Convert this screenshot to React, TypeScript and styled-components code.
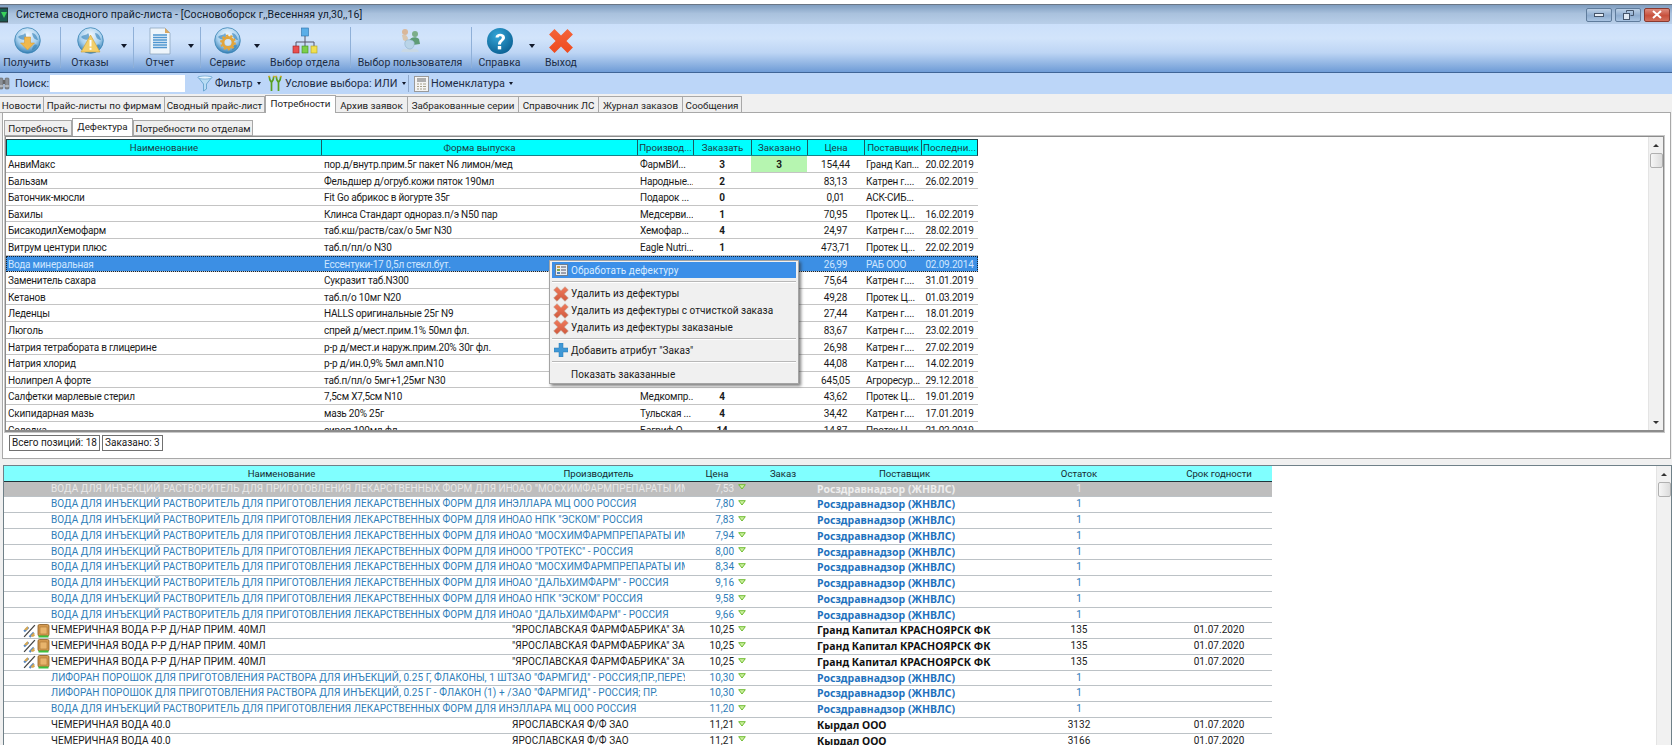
import React from "react";
import styled, { createGlobalStyle } from "styled-components";

const Global = createGlobalStyle`
  html, body { margin: 0; padding: 0; background: #fff; overflow: hidden; }
  #root { width: 1672px; height: 745px; }
`;

const UI = `Roboto, "Noto Sans", sans-serif`;

const Page = styled.div`
  width: 1672px;
  height: 745px;
  overflow: hidden;
  display: flex;
  flex-direction: column;
  background: #f0f0f0;
  font-family: ${UI};
  font-size: 11px;
  color: #111;
`;
const TopStrip = styled.div`
  height: 4px;
  background: #fff;
  border-bottom: 1px solid #6a7684;
  flex: none;
`;
const TitleBar = styled.div`
  height: 19px;
  flex: none;
  display: flex;
  align-items: center;
  background: linear-gradient(#7f9dbf, #a9c1dd 45%, #b9cfe9);
  padding-right: 2px;
`;
const TitleText = styled.div`
  margin-left: 8px;
  flex: 1;
  font-size: 10.5px;
  letter-spacing: 0.1px;
  color: #10202f;
  white-space: nowrap;
`;
const WinBtn = styled.div<{ $close?: boolean }>`
  width: 26px;
  height: 14px;
  margin-left: 3px;
  box-sizing: border-box;
  border: 1px solid ${(p) => (p.$close ? "#8a3a30" : "#5f7c9c")};
  border-radius: 2px;
  display: flex;
  align-items: center;
  justify-content: center;
  background: ${(p) =>
    p.$close
      ? "linear-gradient(#dd8b7c, #c8503c 55%, #d2705c)"
      : "linear-gradient(#bcd0e6, #8fadd0 55%, #a9c4e2)"};
`;
const Toolbar = styled.div`
  height: 48px;
  flex: none;
  display: flex;
  align-items: stretch;
  background: linear-gradient(#cbe0fb, #d2e4fb 30%, #bdd5f4 60%, #6f9cd6);
  border-bottom: 1px solid #3f6597;
`;
const Tool = styled.div<{ $w: number }>`
  width: ${(p) => p.$w}px;
  flex: none;
  display: flex;
  flex-direction: column;
  align-items: center;
  padding-top: 3px;
  box-sizing: border-box;
  font-size: 10.5px;
  letter-spacing: 0.05px;
  color: #1c2c44;
  white-space: nowrap;
`;
const IconSlot = styled.div`
  height: 27px;
  flex: none;
  display: flex;
  align-items: center;
  justify-content: center;
`;
const ToolLabel = styled.span`
  margin-top: 1px;
  line-height: 15px;
`;
const Caret = styled.div<{ $w: number }>`
  width: ${(p) => p.$w}px;
  flex: none;
  display: flex;
  justify-content: center;
  padding-top: 20px;
  box-sizing: border-box;
  &::after {
    content: "";
    border-left: 3.5px solid transparent;
    border-right: 3.5px solid transparent;
    border-top: 4px solid #10182a;
    height: 0;
  }
`;
const Sep = styled.div<{ $ml: number }>`
  width: 1px;
  flex: none;
  margin: 3px 0 4px ${(p) => p.$ml}px;
  background: #8fb0d8;
`;
const SearchBar = styled.div`
  height: 21px;
  flex: none;
  display: flex;
  align-items: center;
  background: #bcd6f8;
  font-size: 10.8px;
  color: #1c2c44;
  white-space: nowrap;
`;
const SearchLabel = styled.div`
  width: 50px;
  flex: none;
  display: flex;
  align-items: center;
`;
const SearchInput = styled.div`
  width: 135px;
  height: 17px;
  background: #fff;
  margin-right: 12px;
  flex: none;
`;
const BarItem = styled.div<{ $w: number; $gap: number }>`
  width: ${(p) => p.$w}px;
  flex: none;
  display: flex;
  align-items: center;
  gap: ${(p) => p.$gap}px;
`;
const SmallCaret = styled.span`
  border-left: 2.5px solid transparent;
  border-right: 2.5px solid transparent;
  border-top: 3px solid #10182a;
  margin-left: 2px;
  height: 0;
`;
const BarSep = styled.div`
  width: 1px;
  height: 17px;
  background: #8fa9cc;
  margin-right: 5px;
  flex: none;
`;
const TabStrip = styled.div`
  height: 18px;
  margin-top: 1px;
  flex: none;
  display: flex;
  position: relative;
  z-index: 1;
  align-items: flex-end;
`;
const Tab = styled.div<{ $w: number; $active?: boolean }>`
  width: ${(p) => p.$w}px;
  height: ${(p) => (p.$active ? 18 : 17)}px;
  flex: none;
  box-sizing: border-box;
  border: 1px solid #a8a8a8;
  border-left-width: ${(p) => (p.$active ? 1 : 0)}px;
  border-bottom: ${(p) => (p.$active ? "none" : "1px solid #a8a8a8")};
  background: ${(p) => (p.$active ? "#fff" : "#efefef")};
  text-align: center;
  line-height: ${(p) => (p.$active ? 16 : 17)}px;
  font-size: 9.8px;
  color: #222;
  white-space: nowrap;
  overflow: hidden;
`;
const Pane = styled.div`
  height: 347px;
  margin: -1px 1px 0 2px;
  flex: none;
  box-sizing: border-box;
  background: #fff;
  border: 1px solid #a8a8a8;
  padding: 6px 6px 0 1px;
  display: flex;
  flex-direction: column;
  position: relative;
`;
const SubTabs = styled.div`
  height: 17px;
  flex: none;
  display: flex;
  align-items: flex-end;
  position: relative;
  z-index: 1;
`;
const SubTab = styled(Tab)`
  border-left-width: 1px;
  height: ${(p) => (p.$active ? 18 : 16)}px;
  line-height: ${(p) => (p.$active ? 15 : 16)}px;
`;
const GridBox = styled.div`
  height: 296px;
  flex: none;
  box-sizing: border-box;
  border: 1px solid #8c8c8c;
  border-bottom-width: 2px;
  outline: 1px solid #c8c8c8;
  background: #fff;
  margin-left: 1px;
  display: flex;
  overflow: hidden;
`;
const GridScroll = styled.div`
  flex: 1;
  padding-top: 2px;
  overflow: hidden;
`;
const UHead = styled.div`
  display: grid;
  grid-template-columns: 314px 316px 56px 58px 56px 57px 57px 56px;
  width: 972px;
  height: 17px;
  background: #00ffff;
  box-sizing: border-box;
  border: 1px solid #1e3f46;
  border-bottom: 1px solid #16838a;
`;
const UHeadCell = styled.div`
  text-align: center;
  line-height: 15px;
  font-size: 9.7px;
  color: #1d3a3f;
  border-left: 1px solid #1e5a62;
  white-space: nowrap;
  overflow: hidden;
  &:first-child { border-left: none; }
`;
const URow = styled.div<{ $sel?: boolean }>`
  display: grid;
  grid-template-columns: 315px 316px 56px 58px 56px 57px 57px 57px;
  width: 972px;
  height: 16.6px;
  box-sizing: border-box;
  border-bottom: 1px solid #c4c4c4;
  font-size: 10px;
  letter-spacing: -0.2px;
  line-height: 17px;
  color: ${(p) => (p.$sel ? "#cfe6ff" : "#1a1a1a")};
  background: ${(p) => (p.$sel ? "#3c8fe4" : "#fff")};
  outline: ${(p) => (p.$sel ? "1px dotted #123" : "none")};
  outline-offset: -1px;
`;
const UCell = styled.div<{ $align?: string; $bold?: boolean; $green?: boolean; $pad?: number }>`
  text-align: ${(p) => p.$align || "left"};
  font-weight: ${(p) => (p.$bold ? 700 : 400)};
  background: ${(p) => (p.$green ? "#b6f5b0" : "transparent")};
  padding-left: ${(p) => p.$pad ?? 0}px;
  white-space: nowrap;
  overflow: hidden;
`;
const VScroll = styled.div`
  width: 15px;
  flex: none;
  background: #f1f1f1;
  border-left: 1px solid #e4e4e4;
  display: flex;
  flex-direction: column;
  align-items: center;
  box-sizing: border-box;
`;
const ScrollEnd = styled.div<{ $down?: boolean }>`
  height: 16px;
  width: 100%;
  flex: none;
  display: flex;
  align-items: center;
  justify-content: center;
  &::after {
    content: "";
    border-left: 3px solid transparent;
    border-right: 3px solid transparent;
    ${(p) => (p.$down ? "border-top: 3px solid #333;" : "border-bottom: 3px solid #333;")}
    height: 0;
  }
`;
const ScrollThumb = styled.div`
  width: 13px;
  height: 15px;
  flex: none;
  box-sizing: border-box;
  border: 1px solid #b0b0b0;
  border-radius: 2px;
  background: linear-gradient(90deg, #f6f6f6, #dcdcdc);
`;
const ScrollFill = styled.div`
  flex: 1;
`;
const StatusRow = styled.div`
  display: flex;
  gap: 2px;
  padding: 3px 0 0 5px;
`;
const StatusBox = styled.div`
  height: 16px;
  box-sizing: border-box;
  border: 1px solid #707070;
  padding: 0 2px;
  line-height: 14px;
  font-size: 10px;
  color: #1a1a1a;
  white-space: nowrap;
`;
const LowerBox = styled.div`
  margin: 6px 0 0 3px;
  flex: 1;
  min-height: 0;
  background: #fff;
  display: flex;
  box-sizing: border-box;
  border: 1px solid #6f8088;
  border-bottom: none;
  overflow: hidden;
`;
const LowerScroll = styled.div`
  width: 1268px;
  flex: none;
  overflow: hidden;
`;
const LowerFill = styled.div`
  flex: 1;
`;
const LCols = "47px 461px 173px 64px 68px 175px 174px 106px";
const LHead = styled.div`
  display: grid;
  grid-template-columns: ${LCols};
  height: 14.5px;
  background: #80ffff;
  border-bottom: 1px solid #20343a;
`;
const LHeadCell = styled.div`
  text-align: center;
  line-height: 15px;
  font-size: 9.6px;
  color: #152a30;
  white-space: nowrap;
`;
const LRow = styled.div<{ $tone: string; $gray?: boolean }>`
  display: grid;
  grid-template-columns: ${LCols};
  height: 15.75px;
  box-sizing: border-box;
  border-bottom: 1px solid #bcc2c6;
  background: ${(p) => (p.$gray ? "#bebebe" : "#fff")};
  color: ${(p) => (p.$gray ? "#e9e9e9" : p.$tone)};
  font-size: 10px;
  line-height: 14.5px;
`;
const LCell = styled.div<{ $align?: string }>`
  white-space: nowrap;
  overflow: hidden;
  text-align: ${(p) => p.$align || "left"};
  letter-spacing: 0.05px;
`;
const LIcons = styled.div`
  display: flex;
  align-items: center;
  justify-content: flex-end;
  gap: 1px;
  padding-right: 1px;
`;
const LPrice = styled.div`
  display: flex;
  align-items: center;
  justify-content: flex-end;
  padding-right: 0;
  gap: 4px;
  overflow: hidden;
`;
const LTriSlot = styled.span`
  display: flex;
  width: 11px;
  flex: none;
  margin-top: -3px;
`;
const LSupplier = styled.div<{ $tone: string }>`
  font-family: "Noto Sans", sans-serif;
  font-weight: 700;
  font-size: 10.5px;
  color: ${(p) => p.$tone};
  white-space: nowrap;
  overflow: hidden;
`;
const Menu = styled.div`
  position: absolute;
  left: 549px;
  top: 147px;
  width: 250px;
  height: 124px;
  box-sizing: border-box;
  background: #f0f0f0;
  border: 1px solid #a4a4a4;
  box-shadow: 2px 2px 3px rgba(40, 40, 40, 0.6);
  padding: 1px 2px;
  z-index: 5;
  font-size: 10px;
  letter-spacing: 0.05px;
  color: #1a1a1a;
`;
const MenuItem = styled.div<{ $hi?: boolean; $h: number }>`
  height: ${(p) => p.$h}px;
  display: flex;
  align-items: center;
  background: ${(p) => (p.$hi ? "#3c8fe8" : "transparent")};
  color: ${(p) => (p.$hi ? "#d8ecff" : "#1a1a1a")};
  white-space: nowrap;
`;
const MenuIcon = styled.div`
  width: 18px;
  flex: none;
  display: flex;
  justify-content: center;
  margin-right: 1px;
`;
const MenuSep = styled.div`
  height: 1px;
  background: #b8b8b8;
  margin: 3px 0 2px 0;
  border-bottom: 1px solid #fff;
`;
const Body = styled.div`
  position: relative;
`;
const NoShrink = styled.svg`
  flex: none;
`;
const BinoSvg = styled.svg`
  flex: none;
  margin: 0 5px 0 -2px;
`;

/* ---------- icons ---------- */
const Globe: React.FC<{ id: string; children?: React.ReactNode }> = ({ id, children }) => (
  <svg width="27" height="27" viewBox="0 0 27 27">
    <defs>
      <radialGradient id={id} cx="50%" cy="30%" r="75%">
        <stop offset="0%" stopColor="#f2f8ff" />
        <stop offset="55%" stopColor="#a8d0ee" />
        <stop offset="100%" stopColor="#1c6ea8" />
      </radialGradient>
    </defs>
    <circle cx="13.5" cy="13.5" r="12.8" fill={`url(#${id})`} stroke="#3a84b4" strokeWidth="0.8" />
    <path d="M4 10c3-3 5-1 7-4 2 2 0 4 2 5-3 3-6 2-9-1zM18 6c3 0 5 3 6 7-3 0-5-2-6-7zM20 18c2-1 3 0 3 1-1 2-3 4-5 4 0-2 1-4 2-5z" fill="#2f7fb6" opacity="0.6" />
    {children}
  </svg>
);
const IconGet = () => (
  <Globe id="g1">
    <path d="M10.500 10h6v6h4l-7 7-7-7h4z" fill="#f0b84c" stroke="#d0952c" strokeWidth="0.5" />
  </Globe>
);
const IconWarn = () => (
  <Globe id="g2">
    <path d="M13.500 8L23 25H4z" fill="#f3cf6a" stroke="#d0a030" strokeWidth="0.6" />
    <rect x="12.500" y="13" width="2" height="6.500" fill="#fff" />
    <rect x="12.500" y="20.800" width="2" height="2" fill="#fff" />
  </Globe>
);
const IconService = () => (
  <Globe id="g3">
    <circle cx="14" cy="15.500" r="5" fill="none" stroke="#e3a53a" strokeWidth="2.800" />
    <circle cx="14" cy="15.500" r="7" fill="none" stroke="#e3a53a" strokeWidth="1.800" strokeDasharray="2.300 2.100" />
    <circle cx="14" cy="15.500" r="3" fill="#cfe4f6" />
  </Globe>
);
const IconDoc = () => (
  <svg width="24" height="28" viewBox="0 0 24 28">
    <path d="M2 1h15l5 5v21H2z" fill="#eef5fb" stroke="#8da6bf" strokeWidth="0.8" />
    <path d="M17 1l5 5h-5z" fill="#d9a860" />
    <path d="M5 8h14M5 10.500h14M5 13h14M5 15.500h14M5 18h14M5 20.500h14" stroke="#4f96d0" strokeWidth="1.500" />
  </svg>
);
const IconOrg = () => (
  <svg width="28" height="27" viewBox="0 0 28 27">
    <rect x="10.500" y="1" width="7" height="8" fill="#5aaee8" stroke="#2a6ea8" strokeWidth="0.6" />
    <path d="M14 9v6M5 19v-4h18v4M14 15v4" stroke="#556" strokeWidth="1" fill="none" />
    <rect x="2" y="19" width="6" height="7" fill="#e85050" stroke="#a02020" strokeWidth="0.6" />
    <rect x="11" y="19" width="6" height="7" fill="#7ccf4a" stroke="#3e8e20" strokeWidth="0.6" />
    <rect x="20" y="19" width="6" height="7" fill="#f0e050" stroke="#b0a020" strokeWidth="0.6" />
  </svg>
);
const IconUsers = () => (
  <svg width="26" height="27" viewBox="0 0 26 27">
    <path d="M4 25h18l-2-3H6z" fill="#c9d8e4" />
    <circle cx="8" cy="5" r="3" fill="#d9b79a" />
    <path d="M5 8c3-1 5 0 6 3l-1 4-4-2z" fill="#d9c6b0" />
    <circle cx="18" cy="7" r="3" fill="#7dae8a" />
    <path d="M12 14c1-4 7-5 10-2l1 5-7 1z" fill="#5f9c76" />
    <path d="M8 15c1-3 7-3 9 0 1 3-1 7-4 7s-6-3-5-7z" fill="#b9d4e8" stroke="#8fb0c8" strokeWidth="0.6" />
  </svg>
);
const IconHelp = () => (
  <svg width="28" height="28" viewBox="0 0 28 28">
    <defs>
      <radialGradient id="hg" cx="40%" cy="30%" r="75%">
        <stop offset="0%" stopColor="#35a6d8" />
        <stop offset="100%" stopColor="#0a5f92" />
      </radialGradient>
    </defs>
    <circle cx="14" cy="14" r="13" fill="url(#hg)" />
    <path d="M9.500 10.500c0-5 9.500-5 9.500 0 0 3.500-4 3.500-4 7h-3c0-4.500 3.800-4.500 3.800-7 0-1.800-3-1.800-3.200 0z" fill="#fff" />
    <rect x="11.800" y="19" width="3.400" height="3.400" fill="#fff" />
  </svg>
);
const Cross: React.FC<{ s: number; id: string; flat?: boolean }> = ({ s, id, flat }) => (
  <NoShrink width={s} height={s} viewBox="0 0 24 24">
    <defs>
      <linearGradient id={id} x1="0" y1="0" x2="0" y2="1">
        <stop offset="0%" stopColor={flat ? "#f07a5c" : "#f4643a"} />
        <stop offset="100%" stopColor={flat ? "#d05a3e" : "#ee4a1e"} />
      </linearGradient>
    </defs>
    <path d="M1 6l5-5 6 6 6-6 5 5-6 6 6 6-5 5-6-6-6 6-5-5 6-6z" fill={`url(#${id})`} stroke={flat ? "#b8a090" : "none"} strokeWidth="0.8" strokeLinejoin="round" />
  </NoShrink>
);
const IconBino = () => (
  <BinoSvg width="12" height="15" viewBox="0 0 12 15">
    <rect x="1" y="2" width="4" height="11" rx="1" fill="#8a8f96" stroke="#555" strokeWidth="0.5" />
    <rect x="7" y="2" width="4" height="11" rx="1" fill="#8a8f96" stroke="#555" strokeWidth="0.5" />
    <rect x="5" y="4" width="2" height="4" fill="#666" />
    <path d="M1 10h4M7 10h4" stroke="#ddd" />
  </BinoSvg>
);
const IconFunnel = () => (
  <NoShrink width="16" height="17" viewBox="0 0 16 17">
    <path d="M1 2h14L9.500 9v5l-3 2V9z" fill="#b8dcf4" stroke="#5a9ac8" strokeWidth="0.8" />
    <ellipse cx="8" cy="2.500" rx="7" ry="1.500" fill="#e8f4fc" stroke="#5a9ac8" strokeWidth="0.6" />
  </NoShrink>
);
const IconFork = () => (
  <NoShrink width="14" height="17" viewBox="0 0 14 17">
    <path d="M1.200 1c0 3.500 1 5 2.300 6.500V16M5.800 1c0 3.500-1 5-2.300 6.500M8.200 1c0 3.500 1 5 2.300 6.500V16M12.800 1c0 3.500-1 5-2.300 6.500" fill="none" stroke="#58a020" strokeWidth="1.700" />
    <path d="M0.400 1.500h1.600M5 1.500h1.600M7.400 1.500H9M12 1.500h1.600" stroke="#d8a828" strokeWidth="1.500" />
  </NoShrink>
);
const IconAbc = () => (
  <NoShrink width="15" height="16" viewBox="0 0 15 16">
    <rect x="0.500" y="0.500" width="14" height="15" fill="#f4f4f4" stroke="#9a9a9a" />
    <path d="M3 3h9M3 5h9" stroke="#666" />
    <path d="M3 8h2M6 8h2M9 8h3M3 10.500h2M6 10.500h2M9 10.500h3M3 13h2M6 13h2M9 13h3" stroke="#a6a08a" strokeWidth="1.200" />
  </NoShrink>
);
const IconProcess = () => (
  <svg width="13" height="12" viewBox="0 0 13 12">
    <rect x="0.500" y="0.500" width="12" height="11" fill="#e8eef4" stroke="#6f7f90" />
    <rect x="2" y="2" width="3" height="2" fill="#d0a050" />
    <rect x="2" y="5" width="3" height="2" fill="#7aa84a" />
    <rect x="2" y="8" width="3" height="2" fill="#4a82c0" />
    <path d="M6 3h5M6 6h5M6 9h5" stroke="#556" />
  </svg>
);
const IconPlus = () => (
  <svg width="14" height="14" viewBox="0 0 14 14">
    <path d="M5 0h4v5h5v4H9v5H5V9H0V5h5z" fill="#3f98d6" stroke="#2a78b0" strokeWidth="0.5" />
  </svg>
);
const IconNote = () => (
  <svg width="13" height="14" viewBox="0 0 12 13">
    <path d="M1 12L11 1" stroke="#444" strokeWidth="1.200" />
    <path d="M1 7l4-4M6 12l4-4" stroke="#5a88c0" strokeWidth="2" />
    <path d="M7 11l3-3 1 3-2 1z" fill="#d8a850" />
    <path d="M1 5l3-3 1 2-2 2z" fill="#d8a850" />
  </svg>
);
const IconBox = () => (
  <svg width="13" height="14" viewBox="0 0 12 14">
    <rect x="0.500" y="0.500" width="11" height="11.500" rx="1.500" fill="#d49a50" stroke="#8a5a20" strokeWidth="0.8" />
    <rect x="2.500" y="3" width="7" height="7" fill="#e8b46c" stroke="#a06c2c" strokeWidth="0.5" />
    <rect x="1" y="11.500" width="10" height="2" fill="#3cc03c" />
  </svg>
);
const IconDownTri = () => (
  <svg width="8" height="6" viewBox="0 0 8 6">
    <path d="M0.700 0.700h6.600L4 5z" fill="#cdf0a0" stroke="#6ebc30" />
  </svg>
);
const IconApp = () => (
  <NoShrink width="8" height="16" viewBox="0 0 8 16">
    <rect x="-4" y="1" width="12" height="14" fill="#1a5a50" stroke="#222" />
    <path d="M1 5h6L4 11z" fill="#38d05a" />
  </NoShrink>
);

/* ---------- data ---------- */
type U = [string, string, string, string, string, string, string, string];
const upper: U[] = [
  ["АнвиМакс", "пор.д/внутр.прим.5г пакет N6 лимон/мед", "ФармВИ...", "3", "3", "154,44", "Гранд Кап...", "20.02.2019"],
  ["Бальзам", "Фельдшер д/огруб.кожи пяток 190мл", "Народные...", "2", "", "83,13", "Катрен г....", "26.02.2019"],
  ["Батончик-мюсли", "Fit Go абрикос в йогурте 35г", "Подарок ...", "0", "", "0,01", "АСК-СИБ...", ""],
  ["Бахилы", "Клинса Стандарт однораз.п/э N50 пар", "Медсерви...", "1", "", "70,95", "Протек Ц...", "16.02.2019"],
  ["БисакодилХемофарм", "таб.кш/раств/сах/о 5мг N30", "Хемофар...", "4", "", "24,97", "Катрен г....", "28.02.2019"],
  ["Витрум центури плюс", "таб.п/пл/о N30", "Eagle Nutri...", "1", "", "473,71", "Протек Ц...", "22.02.2019"],
  ["Вода минеральная", "Ессентуки-17 0,5л стекл.бут.", "", "", "", "26,99", "РАБ ООО", "02.09.2014"],
  ["Заменитель сахара", "Сукразит таб.N300", "", "", "", "75,64", "Катрен г....", "31.01.2019"],
  ["Кетанов", "таб.п/о 10мг N20", "", "", "", "49,28", "Протек Ц...", "01.03.2019"],
  ["Леденцы", "HALLS оригинальные 25г N9", "", "", "", "27,44", "Катрен г....", "18.01.2019"],
  ["Люголь", "спрей д/мест.прим.1% 50мл фл.", "", "", "", "83,67", "Катрен г....", "23.02.2019"],
  ["Натрия тетрабората в глицерине", "р-р д/мест.и наруж.прим.20% 30г фл.", "", "", "", "26,98", "Катрен г....", "27.02.2019"],
  ["Натрия хлорид", "р-р д/ин.0,9% 5мл амп.N10", "", "", "", "44,08", "Катрен г....", "14.02.2019"],
  ["Нолипрел А форте", "таб.п/пл/о 5мг+1,25мг N30", "", "", "", "645,05", "Агроресур...", "29.12.2018"],
  ["Салфетки марлевые стерил", "7,5см Х7,5см N10", "Медкомпр...", "4", "", "43,62", "Протек Ц...", "19.01.2019"],
  ["Скипидарная мазь", "мазь 20% 25г", "Тульская ...", "4", "", "34,42", "Катрен г....", "17.01.2019"],
  ["Солодка", "сироп 100мл фл.", "Багриф О...", "14", "", "14,87", "Протек Ц...", "21.02.2019"],
];
const WATER = "ВОДА ДЛЯ ИНЪЕКЦИЙ РАСТВОРИТЕЛЬ ДЛЯ ПРИГОТОВЛЕНИЯ ЛЕКАРСТВЕННЫХ ФОРМ ДЛЯ ИНЪЕКЦИЙ";
const HELL = "ЧЕМЕРИЧНАЯ ВОДА Р-Р Д/НАР ПРИМ. 40МЛ";
const ROSZ = "Росздравнадзор (ЖНВЛС)";
const GRAND = "Гранд Капитал КРАСНОЯРСК ФК";
type L = { n: string; p: string; c: string; s: string; q: string; d?: string; dark?: boolean; ic?: boolean };
const lower: L[] = [
  { n: WATER, p: 'ОАО "МОСХИМФАРМПРЕПАРАТЫ ИМ. Н.А. СЕМАШКО"', c: "7,53", s: ROSZ, q: "1" },
  { n: WATER, p: "ЭЛЛАРА МЦ ООО РОССИЯ", c: "7,80", s: ROSZ, q: "1" },
  { n: WATER, p: 'ОАО НПК "ЭСКОМ" РОССИЯ', c: "7,83", s: ROSZ, q: "1" },
  { n: WATER, p: 'ОАО "МОСХИМФАРМПРЕПАРАТЫ ИМ. Н.А. СЕМАШКО"', c: "7,94", s: ROSZ, q: "1" },
  { n: WATER, p: 'ООО "ГРОТЕКС" - РОССИЯ', c: "8,00", s: ROSZ, q: "1" },
  { n: WATER, p: 'ОАО "МОСХИМФАРМПРЕПАРАТЫ ИМ. Н.А. СЕМАШКО"', c: "8,34", s: ROSZ, q: "1" },
  { n: WATER, p: 'ОАО "ДАЛЬХИМФАРМ" - РОССИЯ', c: "9,16", s: ROSZ, q: "1" },
  { n: WATER, p: 'ОАО НПК "ЭСКОМ" РОССИЯ', c: "9,58", s: ROSZ, q: "1" },
  { n: WATER, p: 'ОАО "ДАЛЬХИМФАРМ" - РОССИЯ', c: "9,66", s: ROSZ, q: "1" },
  { n: HELL, p: '"ЯРОСЛАВСКАЯ ФАРМФАБРИКА" ЗАО', c: "10,25", s: GRAND, q: "135", d: "01.07.2020", dark: true, ic: true },
  { n: HELL, p: '"ЯРОСЛАВСКАЯ ФАРМФАБРИКА" ЗАО', c: "10,25", s: GRAND, q: "135", d: "01.07.2020", dark: true, ic: true },
  { n: HELL, p: '"ЯРОСЛАВСКАЯ ФАРМФАБРИКА" ЗАО', c: "10,25", s: GRAND, q: "135", d: "01.07.2020", dark: true, ic: true },
  { n: "ЛИФОРАН ПОРОШОК ДЛЯ ПРИГОТОВЛЕНИЯ РАСТВОРА ДЛЯ ИНЪЕКЦИЙ, 0.25 Г, ФЛАКОНЫ, 1 ШТ", p: 'ЗАО "ФАРМГИД" - РОССИЯ;ПР.,ПЕРЕУП.', c: "10,30", s: ROSZ, q: "1" },
  { n: "ЛИФОРАН ПОРОШОК ДЛЯ ПРИГОТОВЛЕНИЯ РАСТВОРА ДЛЯ ИНЪЕКЦИЙ, 0.25 Г - ФЛАКОН (1) + /ЛВЛ. -", p: 'ЗАО "ФАРМГИД" - РОССИЯ; ПР.', c: "10,30", s: ROSZ, q: "1" },
  { n: WATER, p: "ЭЛЛАРА МЦ ООО РОССИЯ", c: "11,20", s: ROSZ, q: "1" },
  { n: "ЧЕМЕРИЧНАЯ ВОДА 40.0", p: "ЯРОСЛАВСКАЯ Ф/Ф ЗАО", c: "11,21", s: "Кырдал ООО", q: "3132", d: "01.07.2020", dark: true },
  { n: "ЧЕМЕРИЧНАЯ ВОДА 40.0", p: "ЯРОСЛАВСКАЯ Ф/Ф ЗАО", c: "11,21", s: "Кырдал ООО", q: "3166", d: "01.07.2020", dark: true },
];

const tabs: [string, number][] = [
  ["Новости", 44], ["Прайс-листы по фирмам", 121], ["Сводный прайс-лист", 100], ["Потребности", 71],
  ["Архив  заявок", 72], ["Забракованные серии", 111], ["Справочник ЛС", 80], ["Журнал заказов", 84], ["Сообщения", 59],
];

export default function App() {
  return (
    <Page>
      <Global />
      <TopStrip />
      <TitleBar>
        <IconApp />
        <TitleText>Система сводного прайс-листа - [Сосновоборск г,,Весенняя ул,30,,16]</TitleText>
        <WinBtn>
          <svg width="10" height="6" viewBox="0 0 10 6"><rect x="0.500" y="1.500" width="9" height="3" fill="#e8eef6" stroke="#44546a" /></svg>
        </WinBtn>
        <WinBtn>
          <svg width="11" height="10" viewBox="0 0 11 10"><path d="M3.500 2.500v-2h7v5h-3" fill="none" stroke="#44546a" /><rect x="0.500" y="3.500" width="6" height="6" fill="#dfe8f3" stroke="#44546a" /></svg>
        </WinBtn>
        <WinBtn $close>
          <svg width="10" height="9" viewBox="0 0 10 9"><path d="M1 1l8 7M9 1L1 8" stroke="#fff" strokeWidth="2" /></svg>
        </WinBtn>
      </TitleBar>
      <Toolbar>
        <Tool $w={54}><IconSlot><IconGet /></IconSlot><ToolLabel>Получить</ToolLabel></Tool>
        <Sep $ml={6} />
        <Tool $w={58}><IconSlot><IconWarn /></IconSlot><ToolLabel>Отказы</ToolLabel></Tool>
        <Caret $w={10} />
        <Sep $ml={4} />
        <Tool $w={52}><IconSlot><IconDoc /></IconSlot><ToolLabel>Отчет</ToolLabel></Tool>
        <Caret $w={10} />
        <Sep $ml={4} />
        <Tool $w={53}><IconSlot><IconService /></IconSlot><ToolLabel>Сервис</ToolLabel></Tool>
        <Caret $w={6} />
        <Tool $w={90}><IconSlot><IconOrg /></IconSlot><ToolLabel>Выбор отдела</ToolLabel></Tool>
        <Sep $ml={0} />
        <Tool $w={118}><IconSlot><IconUsers /></IconSlot><ToolLabel>Выбор пользователя</ToolLabel></Tool>
        <Sep $ml={2} />
        <Tool $w={55}><IconSlot><IconHelp /></IconSlot><ToolLabel>Справка</ToolLabel></Tool>
        <Caret $w={10} />
        <Tool $w={48}><IconSlot><Cross s={26} id="xbig" /></IconSlot><ToolLabel>Выход</ToolLabel></Tool>
      </Toolbar>
      <SearchBar>
        <SearchLabel><IconBino /><span>Поиск:</span></SearchLabel>
        <SearchInput />
        <BarItem $w={71} $gap={2}><IconFunnel /><span>Фильтр</span><SmallCaret /></BarItem>
        <BarItem $w={140} $gap={3}><IconFork /><span>Условие выбора: ИЛИ</span><SmallCaret /></BarItem>
        <BarSep />
        <BarItem $w={110} $gap={2}><IconAbc /><span>Номенклатура</span><SmallCaret /></BarItem>
      </SearchBar>
      <TabStrip>
        {tabs.map(([t, w], i) => (
          <Tab key={t} $w={w} $active={i === 3}>{t}</Tab>
        ))}
      </TabStrip>
      <Body>
        <Pane>
          <SubTabs>
            <SubTab $w={68}>Потребность</SubTab>
            <SubTab $w={61} $active>Дефектура</SubTab>
            <SubTab $w={120}>Потребности по отделам</SubTab>
          </SubTabs>
          <GridBox>
            <GridScroll>
              <UHead>
                {["Наименование", "Форма выпуска", "Производ...", "Заказать", "Заказано", "Цена", "Поставщик", "Последни..."].map((h) => (
                  <UHeadCell key={h}>{h}</UHeadCell>
                ))}
              </UHead>
              {upper.map((r, i) => (
                <URow key={r[0]} $sel={i === 6}>
                  <UCell $pad={2}>{r[0]}</UCell>
                  <UCell $pad={3}>{r[1]}</UCell>
                  <UCell $pad={3}>{r[2]}</UCell>
                  <UCell $align="center" $bold>{r[3]}</UCell>
                  <UCell $align="center" $bold $green={!!r[4]}>{r[4]}</UCell>
                  <UCell $align="center">{r[5]}</UCell>
                  <UCell $pad={2}>{r[6]}</UCell>
                  <UCell $align="center">{r[7]}</UCell>
                </URow>
              ))}
            </GridScroll>
            <VScroll>
              <ScrollEnd />
              <ScrollThumb />
              <ScrollFill />
              <ScrollEnd $down />
            </VScroll>
          </GridBox>
          <StatusRow>
            <StatusBox>Всего позиций: 18</StatusBox>
            <StatusBox>Заказано: 3</StatusBox>
          </StatusRow>
        </Pane>
        <Menu>
          <MenuItem $hi $h={16}><MenuIcon><IconProcess /></MenuIcon>Обработать дефектуру</MenuItem>
          <MenuSep />
          <MenuItem $h={17}><MenuIcon><Cross s={16} id="m1" flat /></MenuIcon>Удалить из дефектуры</MenuItem>
          <MenuItem $h={17}><MenuIcon><Cross s={16} id="m2" flat /></MenuIcon>Удалить из дефектуры с отчисткой заказа</MenuItem>
          <MenuItem $h={16}><MenuIcon><Cross s={16} id="m3" flat /></MenuIcon>Удалить из дефектуры заказаные</MenuItem>
          <MenuSep />
          <MenuItem $h={16}><MenuIcon><IconPlus /></MenuIcon>Добавить атрибут "Заказ"</MenuItem>
          <MenuSep />
          <MenuItem $h={19}><MenuIcon />Показать заказанные</MenuItem>
        </Menu>
      </Body>
      <LowerBox>
        <LowerScroll>
          <LHead>
            <LHeadCell />
            <LHeadCell>Наименование</LHeadCell>
            <LHeadCell>Производитель</LHeadCell>
            <LHeadCell>Цена</LHeadCell>
            <LHeadCell>Заказ</LHeadCell>
            <LHeadCell>Поставщик</LHeadCell>
            <LHeadCell>Остаток</LHeadCell>
            <LHeadCell>Срок годности</LHeadCell>
          </LHead>
          {lower.map((r, i) => (
            <LRow key={i} $tone={r.dark ? "#1a1a1a" : "#2e7db8"} $gray={i === 0}>
              <LIcons>{r.ic && (<><IconNote /><IconBox /></>)}</LIcons>
              <LCell>{r.n}</LCell>
              <LCell>{r.p}</LCell>
              <LPrice>{r.c}<LTriSlot><IconDownTri /></LTriSlot></LPrice>
              <LCell />
              <LSupplier $tone={i === 0 ? "#eeeeee" : r.dark ? "#111" : "#1f72bd"}>{r.s}</LSupplier>
              <LCell $align="center">{r.q}</LCell>
              <LCell $align="center">{r.d}</LCell>
            </LRow>
          ))}
        </LowerScroll>
        <LowerFill />
        <VScroll>
          <ScrollEnd />
          <ScrollThumb />
          <ScrollFill />
        </VScroll>
      </LowerBox>
    </Page>
  );
}
